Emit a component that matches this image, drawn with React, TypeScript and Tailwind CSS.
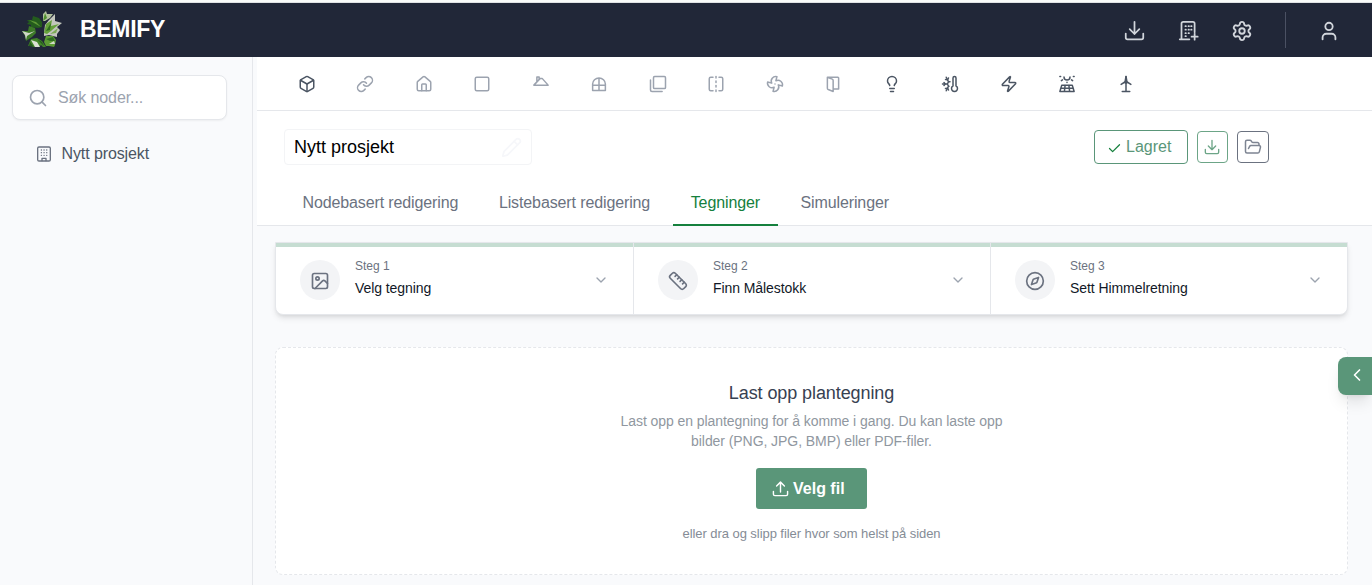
import React from "react";
import {
  Box,
  Check,
  ChevronDown,
  ChevronLeft,
  Compass,
  Fan,
  FlipHorizontal,
  FolderOpen,
  House,
  Image,
  Lightbulb,
  Link,
  Pencil,
  Ruler,
  Search,
  Settings,
  Square,
  ThermometerSnowflake,
  User,
  Zap,
} from "lucide-react";

type IconProps = { size?: number; className?: string; strokeWidth?: number };

function Svg({ size = 18, className, strokeWidth = 2, children }: IconProps & { children: React.ReactNode }) {
  return (
    <svg
      width={size}
      height={size}
      viewBox="0 0 24 24"
      fill="none"
      stroke="currentColor"
      strokeWidth={strokeWidth}
      strokeLinecap="round"
      strokeLinejoin="round"
      className={className}
    >
      {children}
    </svg>
  );
}

const Roof = (p: IconProps) => (
  <Svg {...p}>
    <path d="M2.500 13.500 11 4.500h2.500l8 9zM6.500 9V2.500h3v3" />
  </Svg>
);

const ArchWindow = (p: IconProps) => (
  <Svg {...p}>
    <path d="M3.500 20.500v-8.500a8.500 8 0 0 1 17 0v8.500zM12 4v16.500M3.500 13.500h17" />
  </Svg>
);

const Layers = (p: IconProps) => (
  <Svg {...p}>
    <rect x="6" y="2" width="16" height="16" rx="1.5" />
    <path d="M2 6.500V20a2 2 0 0 0 2 2h13.500" />
  </Svg>
);

const Door = (p: IconProps) => (
  <Svg {...p}>
    <path d="M4.500 3h14a1 1 0 0 1 1 1v14.500h-7M4.500 3l6.500 2.500a2 2 0 0 1 1.200 1.800V22l-6.500-2.600a2 2 0 0 1-1.200-1.800z" />
  </Svg>
);

const SolarPanel = (p: IconProps) => (
  <Svg {...p}>
    <path d="M5 13.500h14l2.500 8.500h-19zM3.500 17.700h17M9.500 13.500l-1 8.500M14.500 13.500l1 8.500M2.500 2h1M20.500 2h1M4.500 7.500l1.500-1M19.500 7.500l-1.500-1M12 9.500v.5M8 2.500a4 4 0 0 0 8 0" />
  </Svg>
);

const Turbine = (p: IconProps) => (
  <Svg {...p}>
    <path d="M12 2v20M7 22h10M11 9l-5.500 3.500M13 9l5.500 3.500" />
    <path d="M12 2 11 7.500v3h2v-3z" fill="currentColor" />
  </Svg>
);

const Tray = (p: IconProps) => (
  <Svg {...p}>
    <path d="M12 2v14M6.500 10.500 12 16l5.500-5.500M2 15.500V20a2 2 0 0 0 2 2h16a2 2 0 0 0 2-2v-4.500" />
  </Svg>
);

const UploadTray = (p: IconProps) => (
  <Svg {...p}>
    <path d="M12 17V3M6.500 8.500 12 3l5.500 5.500M2 16v4a2 2 0 0 0 2 2h16a2 2 0 0 0 2-2v-4" />
  </Svg>
);

const BuildingPlus = (p: IconProps) => (
  <Svg {...p}>
    <path d="M2 22h11M4 22V4a2 2 0 0 1 2-2h11a2 2 0 0 1 2 2v10M19 15.500v7M15.500 19h7M8.500 7h.5M12 7h.5M15 7h.5M8.500 11h.5M12 11h.5M15 11h.5M8.500 15h.5M12 15h.5M8.500 18.500h.5" />
  </Svg>
);

const Building = (p: IconProps) => (
  <Svg {...p}>
    <rect x="2.500" y="1.500" width="19" height="21" rx="2" />
    <path d="M8 6h.2M12 6h.2M16 6h.2M8 10h.2M12 10h.2M16 10h.2M8 14h.2M12 14h.2M16 14h.2M9 22v-3.500h6V22" />
  </Svg>
);

function Logo() {
  return (
    <svg width="40" height="38" viewBox="0 0 40 38">
      {/* top */}
      <path d="m21 10 0-7 3-3 1 3 6 0-3 4-5 3z" fill="#b4c49f" />
      <path d="m21 10 2-8 2 5z" fill="#4f8f2e" />
      {/* upper left */}
      <path d="m5 9 5 0 1-4 6 2 3 4 0 5-4 1-7-1 0-2-4-1 2-2z" fill="#245c1d" />
      <path d="m7 9 7 2 5 5-7-4z" fill="#5f9937" />
      {/* right */}
      <path d="m22 22 1-8 4-5 6-6 0 7 7 2-5 4 3 3-3 4 0 3-8-2-5 1z" fill="#c3c7bd" />
      <path d="m22 22 2-9 6-4-1 6 8-2-8 7-4 3z" fill="#66a23b" />
      <path d="m24 20 5-8-1 7z" fill="#2f6d21" />
      <path d="m28 23 8-6-2 5z" fill="#7cab56" />
      {/* left */}
      <path d="m0 20 6 0 1-5 6 2 1 5-4 4-6 4-1-5z" fill="#3d7a28" />
      <path d="m0 20 7 2 6-2-8 5-1 4-1-5z" fill="#cfd6c8" />
      {/* bottom left */}
      <path d="m6 35 3-7 6-1 5 3 4 6-3 0-2-2-2 2-6 0-2-2z" fill="#43852a" />
      <path d="m9 29 6 2 3 5-5 0z" fill="#dbe2d4" />
      <path d="m8 31 4 5-5-1zM15 28l5 3 2 4z" fill="#245c1d" />
      {/* bottom right */}
      <path d="m22 31 2-6 7 0 3 4-1 5-1 2-5-1-3 0z" fill="#5d9c35" />
      <path d="m24 28 7-2 2 4-5 0z" fill="#2f6d21" />
      <path d="m27 33 5-3 1 3z" fill="#d3dcc8" />
    </svg>
  );
}

const tools = [
  { icon: Box, active: true },
  { icon: Link },
  { icon: House },
  { icon: Square },
  { icon: Roof },
  { icon: ArchWindow },
  { icon: Layers },
  { icon: FlipHorizontal },
  { icon: Fan },
  { icon: Door },
  { icon: Lightbulb, active: true },
  { icon: ThermometerSnowflake, active: true },
  { icon: Zap, active: true },
  { icon: SolarPanel, active: true },
  { icon: Turbine, active: true },
];

const tabs = ["Nodebasert redigering", "Listebasert redigering", "Tegninger", "Simuleringer"];

const steps = [
  { label: "Steg 1", title: "Velg tegning", icon: Image },
  { label: "Steg 2", title: "Finn Målestokk", icon: Ruler },
  { label: "Steg 3", title: "Sett Himmelretning", icon: Compass },
];

function Header() {
  return (
    <header className="flex h-[55px] shrink-0 items-center border-t border-[#dfe2e4] bg-[#212738] pl-[22px] pr-8">
      <Logo />
      <h1 className="ml-[18px] -mt-0.5 text-[23px] font-bold tracking-[-0.3px] text-white">BEMIFY</h1>
      <div className="ml-auto flex items-center text-[#d1d5db]">
        <Tray size={21} className="mt-px" />
        <BuildingPlus size={21} className="ml-[33px] mt-px" />
        <Settings size={22} className="ml-8 mt-px" />
        <div className="ml-8 h-9 w-px bg-[#4b5163]" />
        <User size={22} className="ml-8 mt-px" />
      </div>
    </header>
  );
}

function Sidebar() {
  return (
    <aside className="w-[253px] shrink-0 border-r border-[#e5e7eb] bg-[#f9fafc] pl-3 pt-[18px]">
      <div className="flex h-[45px] w-[215px] items-center rounded-lg border border-[#e5e7eb] bg-white pl-[15px] shadow-xs">
        <Search size={20} className="text-[#9ca3af]" />
        <span className="ml-[10px] text-base tracking-[-0.1px] text-[#9ca3af]">Søk noder...</span>
      </div>
      <div className="mt-[22px] flex items-center pl-6">
        <Building size={16} className="text-[#6b7280]" />
        <span className="ml-[9.5px] text-base tracking-[-0.1px] text-[#4b5563]">Nytt prosjekt</span>
      </div>
    </aside>
  );
}

function ProjectBar() {
  return (
    <div className="flex h-[68px] items-center pl-[27px] pr-[103px] pt-1">
      <div className="flex h-9 w-[248px] items-center justify-between rounded border border-[#f3f4f6] px-[9px] text-lg text-black">
        <span>Nytt prosjekt</span>
        <Pencil size={21} strokeWidth={2} className="text-[#f6f7fa]" />
      </div>
      <div className="ml-auto flex items-center">
        <button className="flex h-[34px] w-[94px] items-center rounded border border-[#5a9679] pl-3 text-base text-[#5a9679]">
          <Check size={15} className="mt-0.5 mr-1 text-[#15803d]" />
          Lagret
        </button>
        <button className="ml-[9px] flex h-8 w-[31px] items-center justify-center rounded border border-[#6ca587] pr-px text-[#6ca587]">
          <Tray size={16} />
        </button>
        <button className="ml-[9px] flex h-8 w-8 items-center justify-center rounded border border-[#6b7280] text-[#7d8492]">
          <FolderOpen size={18} />
        </button>
      </div>
    </div>
  );
}

function Steps() {
  return (
    <div className="grid h-[73px] grid-cols-3 rounded-b-lg border border-[#e5e7eb] bg-white shadow-md">
      {steps.map(({ label, title, icon: Icon }, i) => (
        <div
          key={label}
          className={`flex flex-col ${i > 0 ? "border-l border-[#e5e7eb]" : ""}`}
        >
          <div className="h-1 shrink-0 bg-[#c6ddd2]" />
          <div className="flex flex-1 items-center pb-px pl-[23.5px] pr-[24.5px]">
            <div className="flex h-10 w-10 items-center justify-center rounded-full bg-[#f3f4f6] pt-px text-[#6b7280]">
              <Icon size={20} />
            </div>
            <div className="ml-[15.5px] -mt-[7px]">
              <p className="text-xs leading-[22px] text-[#6b7280]">{label}</p>
              <p className="text-sm leading-[22px] tracking-[-0.07px] text-[#111827]">{title}</p>
            </div>
            <ChevronDown size={16} className="ml-auto text-[#9ca3af]" />
          </div>
        </div>
      ))}
    </div>
  );
}

function Upload() {
  return (
    <div className="mt-8 flex h-[228px] flex-col items-center rounded-lg border border-dashed border-[#e5e7eb] bg-white pt-[31px]">
      <h2 className="text-lg leading-7 tracking-[-0.09px] text-[#374151]">Last opp plantegning</h2>
      <p className="mt-1 w-[400px] text-center text-sm leading-5 tracking-[-0.07px] text-[#9097a0]">
        Last opp en plantegning for å komme i gang. Du kan laste opp bilder (PNG, JPG, BMP) eller PDF-filer.
      </p>
      <button className="mt-[17px] flex h-[41px] w-[111px] items-center rounded-[3px] bg-[#5a9679] pl-4 text-base font-bold text-white">
        <UploadTray size={17} className="mr-1" />
        Velg fil
      </button>
      <p className="mt-[15px] text-[13px] leading-5 tracking-[-0.06px] text-[#858c96]">
        eller dra og slipp filer hvor som helst på siden
      </p>
    </div>
  );
}

function App() {
  return (
    <div className="relative flex h-[585px] w-[1372px] flex-col overflow-hidden border-t-2 border-[#f9fbfa] bg-[#f9fafc] font-['Liberation_Sans',Arial,sans-serif]">
      <Header />
      <div className="flex flex-1">
        <Sidebar />
        <main className="ml-1 flex-1">
          <div className="border-b border-[#e5e7eb] bg-white">
            <div className="flex h-[54px] items-center border-b border-[#e5e7eb] pl-[20.7px]">
              {tools.map(({ icon: Icon, active }, i) => (
                <div
                  key={i}
                  className={`flex w-[58.5px] justify-center ${active ? "text-[#4b5563]" : "text-[#9ca3af]"}`}
                >
                  <Icon size={18} />
                </div>
              ))}
            </div>
            <ProjectBar />
            <nav className="-mb-px flex h-[47px] gap-[4.6px] pl-[27.5px]">
              {tabs.map((tab) => (
                <div
                  key={tab}
                  className={`flex h-full items-center border-b-2 px-[18px] pt-0.5 text-base tracking-[-0.12px] ${
                    tab === "Tegninger" ? "border-[#15803d] text-[#15803d]" : "border-transparent text-[#6b7280]"
                  }`}
                >
                  {tab}
                </div>
              ))}
            </nav>
          </div>
          <div className="pl-[18px] pr-6 pt-4">
            <Steps />
            <Upload />
          </div>
        </main>
      </div>
      {/* drawer handle over the right edge */}
      <button className="absolute right-0 top-[355px] flex h-[38px] w-[34px] items-center justify-center rounded-l-lg bg-[#5a9679] pb-0.5 pl-1 text-white shadow-lg">
        <ChevronLeft size={20} />
      </button>
    </div>
  );
}

export default App;
